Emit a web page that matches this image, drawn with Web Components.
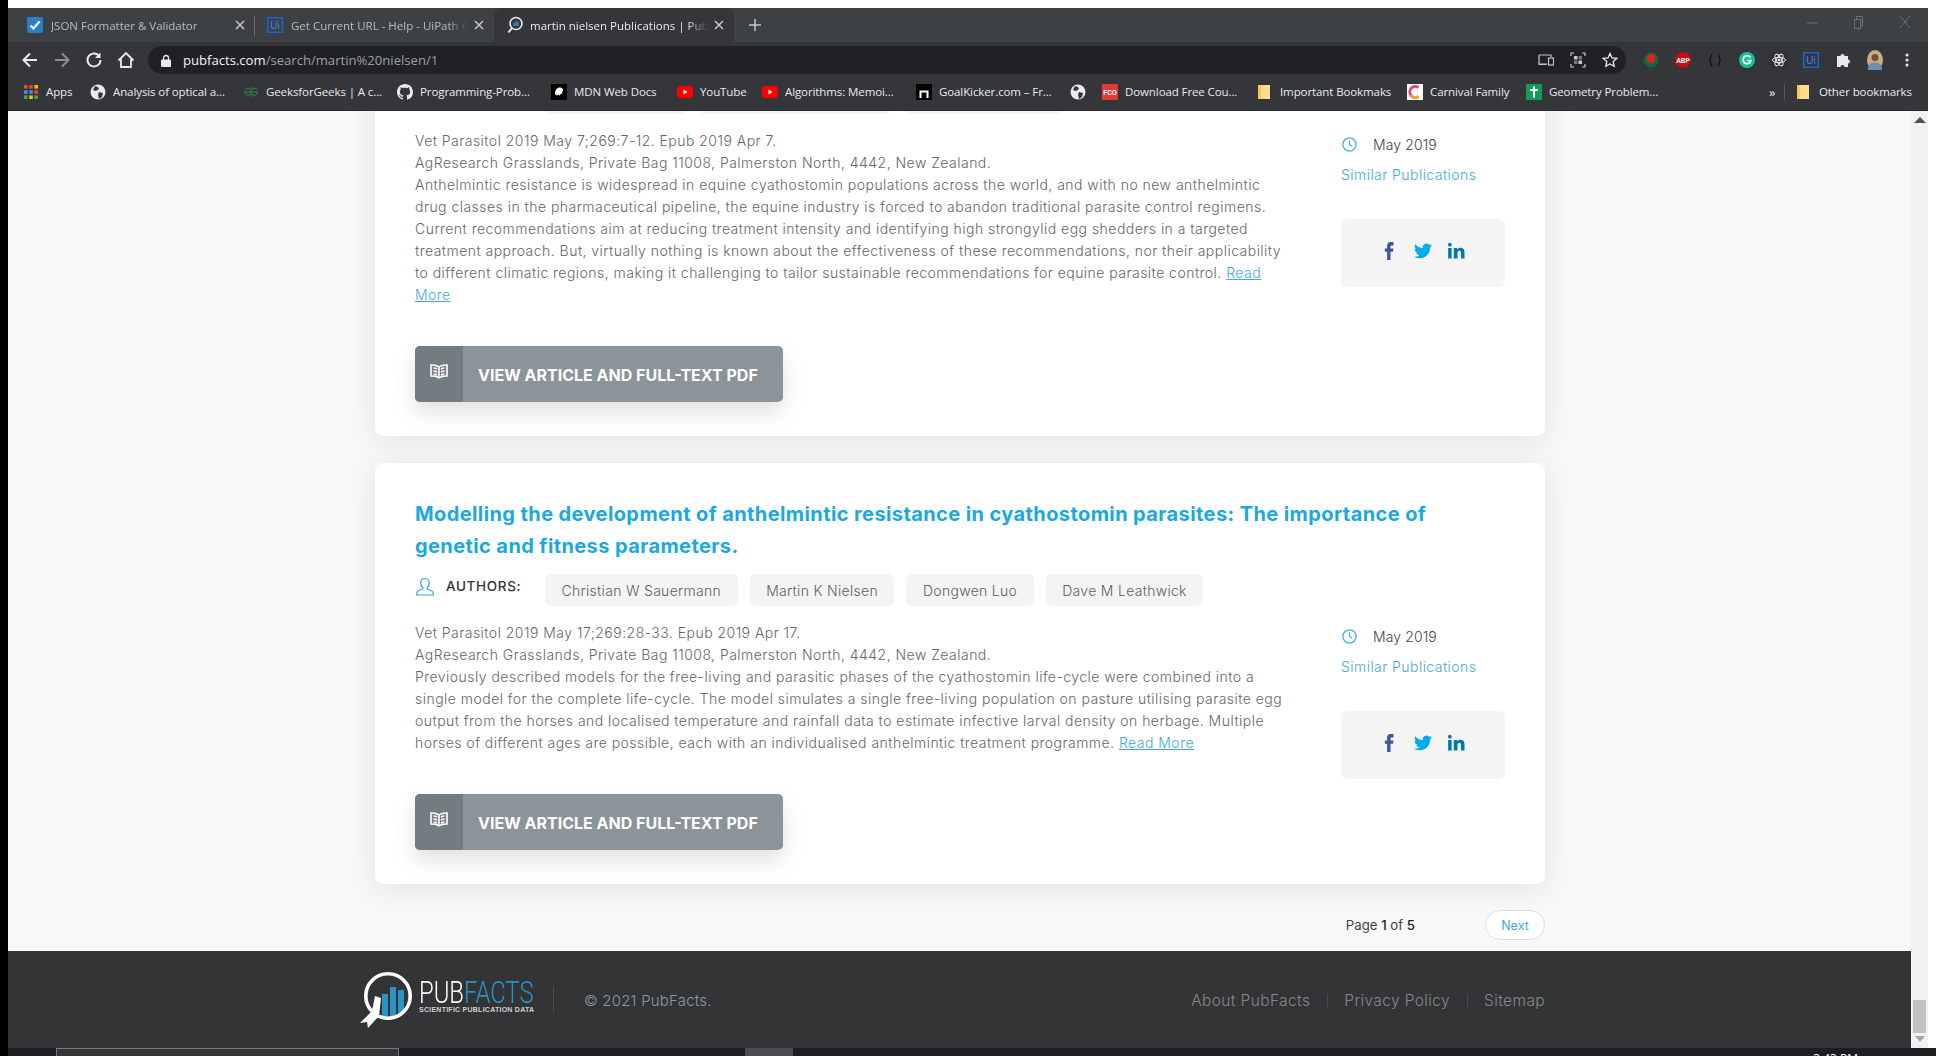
<!DOCTYPE html>
<html lang="en">
<head>
<meta charset="utf-8">
<title>martin nielsen Publications | PubFacts</title>
<style>
  html, body { margin: 0; height: 100%; background: #fff; overflow: hidden; }
</style>
</head>
<body>
<app-window>
  <browser-chrome slot="chrome">
    <chrome-tab slot="tabs" width="240" label="JSON Formatter &amp; Validator">
      <svg slot="icon" width="16" height="16" viewBox="0 0 16 16"><rect width="16" height="16" rx="2" fill="#2b7fc4"/><path d="M3.5 8.5l3 3 6-7" fill="none" stroke="#fff" stroke-width="2.2"/></svg>
    </chrome-tab>
    <chrome-tab slot="tabs" width="239" label="Get Current URL - Help - UiPath Community Forum" divider>
      <svg slot="icon" width="16" height="16" viewBox="0 0 16 16"><rect x=".7" y=".7" width="14.6" height="14.6" fill="none" stroke="#1667d9" stroke-width="1.4"/><text x="8" y="12" font-size="10" font-family="Liberation Sans" fill="#2f8cf0" text-anchor="middle">Ui</text></svg>
    </chrome-tab>
    <chrome-tab slot="tabs" width="240" label="martin nielsen Publications | PubFacts" active>
      <svg slot="icon" width="18" height="18" viewBox="0 0 18 18"><circle cx="10" cy="7.5" r="6" fill="none" stroke="#e8eaed" stroke-width="1.6"/><path d="M8 10V7M10 10V5M12 10V6" stroke="#2a93c4" stroke-width="1.6"/><path d="M6 12l-3.5 4.5" stroke="#e8eaed" stroke-width="2"/></svg>
    </chrome-tab>

    <chrome-bookmark slot="marks" width="67" label="Apps">
      <svg slot="icon" width="16" height="16" viewBox="0 0 16 16"><g fill="#ea4335"><rect x="1" y="1" width="3.6" height="3.6"/><rect x="6.2" y="1" width="3.6" height="3.6"/></g><rect x="11.4" y="1" width="3.6" height="3.6" fill="#fbbc05"/><g fill="#4285f4"><rect x="1" y="6.2" width="3.6" height="3.6"/><rect x="6.2" y="6.2" width="3.6" height="3.6"/></g><rect x="11.4" y="6.2" width="3.6" height="3.6" fill="#ea4335"/><rect x="1" y="11.4" width="3.6" height="3.6" fill="#34a853"/><rect x="6.2" y="11.4" width="3.6" height="3.6" fill="#fbbc05"/><rect x="11.4" y="11.4" width="3.6" height="3.6" fill="#34a853"/></svg>
    </chrome-bookmark>
    <chrome-bookmark slot="marks" width="153" label="Analysis of optical a...">
      <svg slot="icon" width="16" height="16" viewBox="0 0 16 16"><circle cx="8" cy="8" r="7.5" fill="#e8eaed"/><path d="M5 2l3 1 1 2-3 2-3-1zM9 8l4 1-1 4-3 2-1-4z" fill="#35363a"/></svg>
    </chrome-bookmark>
    <chrome-bookmark slot="marks" width="154" label="GeeksforGeeks | A c...">
      <svg slot="icon" width="16" height="16" viewBox="0 0 16 16"><path d="M8 8H1.5a3.4 3.4 0 0 0 5.6 2.4M8 8h6.5a3.4 3.4 0 0 1-5.6 2.4M2 5.5a3.4 3.4 0 0 1 5 0M14 5.5a3.4 3.4 0 0 0-5 0M8 3v10" fill="none" stroke="#2f8d46" stroke-width="1"/></svg>
    </chrome-bookmark>
    <chrome-bookmark slot="marks" width="154" label="Programming-Prob...">
      <svg slot="icon" width="16" height="16" viewBox="0 0 16 16"><path fill="#e8eaed" d="M8 0C3.58 0 0 3.58 0 8c0 3.54 2.29 6.53 5.47 7.59.4.07.55-.17.55-.38 0-.19-.01-.82-.01-1.49-2.01.37-2.53-.49-2.69-.94-.09-.23-.48-.94-.82-1.13-.28-.15-.68-.52-.01-.53.63-.01 1.08.58 1.23.82.72 1.21 1.87.87 2.33.66.07-.52.28-.87.51-1.07-1.78-.2-3.64-.89-3.64-3.95 0-.87.31-1.59.82-2.15-.08-.2-.36-1.02.08-2.12 0 0 .67-.21 2.2.82.64-.18 1.32-.27 2-.27s1.36.09 2 .27c1.53-1.04 2.2-.82 2.2-.82.44 1.1.16 1.92.08 2.12.51.56.82 1.27.82 2.15 0 3.07-1.87 3.75-3.65 3.95.29.25.54.73.54 1.48 0 1.07-.01 1.93-.01 2.2 0 .21.15.46.55.38A8.013 8.013 0 0016 8c0-4.42-3.58-8-8-8z"/></svg>
    </chrome-bookmark>
    <chrome-bookmark slot="marks" width="126" label="MDN Web Docs">
      <svg slot="icon" width="16" height="16" viewBox="0 0 16 16"><rect width="16" height="16" fill="#000"/><path d="M4 10c0-4 2-6.5 5-6.5 2 0 3.5 1.5 3 3.5l-1 1 .5 1.5-2 .5-.5 1.5-1.5-1-1.5 1z" fill="#fff"/></svg>
    </chrome-bookmark>
    <chrome-bookmark slot="marks" width="85" label="YouTube">
      <svg slot="icon" width="16" height="16" viewBox="0 0 16 16"><rect y="2" width="16" height="12" rx="3" fill="#f00"/><path d="M6.5 5.5v5l4-2.5z" fill="#fff"/></svg>
    </chrome-bookmark>
    <chrome-bookmark slot="marks" width="154" label="Algorithms: Memoi...">
      <svg slot="icon" width="16" height="16" viewBox="0 0 16 16"><rect y="2" width="16" height="12" rx="3" fill="#f00"/><path d="M6.5 5.5v5l4-2.5z" fill="#fff"/></svg>
    </chrome-bookmark>
    <chrome-bookmark slot="marks" width="154" label="GoalKicker.com – Fr...">
      <svg slot="icon" width="16" height="16" viewBox="0 0 16 16"><rect width="16" height="16" fill="#000"/><path d="M3.5 14V6.5h9V14h-2V8.5h-5V14z" fill="#fff"/></svg>
    </chrome-bookmark>
    <chrome-bookmark slot="marks" width="32">
      <svg slot="icon" width="16" height="16" viewBox="0 0 16 16"><circle cx="8" cy="8" r="7.5" fill="#e8eaed"/><path d="M5 2l3 1 1 2-3 2-3-1zM9 8l4 1-1 4-3 2-1-4z" fill="#35363a"/></svg>
    </chrome-bookmark>
    <chrome-bookmark slot="marks" width="156" label="Download Free Cou...">
      <svg slot="icon" width="16" height="16" viewBox="0 0 16 16"><rect width="16" height="16" fill="#e53935"/><text x="8" y="11" font-size="6.5" font-weight="700" font-family="Liberation Sans" fill="#fff" text-anchor="middle">FCO</text></svg>
    </chrome-bookmark>
    <chrome-bookmark slot="marks" width="149" label="Important Bookmaks">
      <svg slot="icon" style="margin-right:3px" width="12" height="16" viewBox="0 0 12 16"><path d="M0 1h12v14H0z" fill="#fcdc8c"/><path d="M0 1h3v14H0z" fill="#f6c65a"/></svg>
    </chrome-bookmark>
    <chrome-bookmark slot="marks" width="119" label="Carnival Family">
      <svg slot="icon" width="16" height="16" viewBox="0 0 16 16"><rect width="16" height="16" fill="#fff"/><path d="M11.5 3.5A5.5 5.5 0 1 0 11.5 12.5" fill="none" stroke="#e0457b" stroke-width="3"/><path d="M4 11a5.5 5.5 0 0 0 7.5 1.5" fill="none" stroke="#f4a62a" stroke-width="3"/></svg>
    </chrome-bookmark>
    <chrome-bookmark slot="marks" width="243" label="Geometry Problem...">
      <svg slot="icon" width="16" height="16" viewBox="0 0 16 16"><rect width="16" height="16" rx="1" fill="#0f9d58"/><path d="M8 2.5v11M4 6h8" stroke="#fff" stroke-width="2"/></svg>
    </chrome-bookmark>
  </browser-chrome>

  <page-view slot="page">
    <pub-card first>
      <author-chip slot="authors" style="width:142px"></author-chip>
      <author-chip slot="authors" style="width:193px"></author-chip>
      <author-chip slot="authors" style="width:158px"></author-chip>
      Vet Parasitol 2019 May 7;269:7-12. Epub 2019 Apr 7.<br>
      AgResearch Grasslands, Private Bag 11008, Palmerston North, 4442, New Zealand.<br>
      Anthelmintic resistance is widespread in equine cyathostomin populations across the world, and with no new anthelmintic<br>
      drug classes in the pharmaceutical pipeline, the equine industry is forced to abandon traditional parasite control regimens.<br>
      Current recommendations aim at reducing treatment intensity and identifying high strongylid egg shedders in a targeted<br>
      treatment approach. But, virtually nothing is known about the effectiveness of these recommendations, nor their applicability<br>
      to different climatic regions, making it challenging to tailor sustainable recommendations for equine parasite control. <a href="#" style="color:#3fa9dc">Read<br>More</a>
    </pub-card>
    <pub-card heading="Modelling the development of anthelmintic resistance in cyathostomin parasites: The importance of genetic and fitness parameters.">
      <author-chip slot="authors">Christian W Sauermann</author-chip>
      <author-chip slot="authors">Martin K Nielsen</author-chip>
      <author-chip slot="authors">Dongwen Luo</author-chip>
      <author-chip slot="authors">Dave M Leathwick</author-chip>
      Vet Parasitol 2019 May 17;269:28-33. Epub 2019 Apr 17.<br>
      AgResearch Grasslands, Private Bag 11008, Palmerston North, 4442, New Zealand.<br>
      Previously described models for the free-living and parasitic phases of the cyathostomin life-cycle were combined into a<br>
      single model for the complete life-cycle. The model simulates a single free-living population on pasture utilising parasite egg<br>
      output from the horses and localised temperature and rainfall data to estimate infective larval density on herbage. Multiple<br>
      horses of different ages are possible, each with an individualised anthelmintic treatment programme. <a href="#" style="color:#3fa9dc">Read More</a>
    </pub-card>
    <pager-bar></pager-bar>
    <site-footer></site-footer>
  </page-view>
</app-window>

<script>
const UI_FONT = '"Open Sans", "Liberation Sans", sans-serif';
const PAGE_FONT = 'Inter, "Liberation Sans", sans-serif';

class AppWindow extends HTMLElement {
  constructor() {
    super();
    this.attachShadow({ mode: 'open' }).innerHTML = `
      <style>
        :host { display: block; width: 1936px; height: 1056px; overflow: hidden; background: #fff; }
        .frame { display: flex; flex-direction: column; height: 1056px; box-sizing: border-box; padding-top: 8px; border-left: 8px solid #000; }
        .win { width: 1920px; height: 1040px; display: flex; flex-direction: column; flex: none; }
        .body { flex: 1; min-height: 0; display: flex; }
        .view { flex: 1; min-width: 0; overflow: hidden; display: flex; }
        .scroll { width: 17px; flex: none; background: #f1f1f1; display: flex; flex-direction: column; align-items: center; justify-content: space-between; padding: 6px 0 6px; box-sizing: border-box; }
        .thumb { width: 13px; height: 33px; background: #c1c1c1; margin-top: auto; margin-bottom: 3px; }
        .up { width: 0; border: 6px solid transparent; border-top: 0; border-bottom: 6px solid #505050; }
        .down { width: 0; border: 5px solid transparent; border-bottom: 0; border-top: 6px solid #a3a3a3; }
        .taskbar { height: 8px; flex: none; background: #1d1e22; position: relative; overflow: hidden; display: flex; font: 12px ${UI_FONT}; color: #fff; }
        .task-a { width: 343px; margin-left: 48px; background: #333435; border: 1px solid #77787a; border-bottom: 0; box-sizing: border-box; }
        .task-b { width: 48px; margin-left: 346px; background: #4b4c50; }
        .clock { margin-left: auto; margin-right: 78px; line-height: 1; padding-top: 5px; }
      </style>
      <div class="frame">
        <div class="win">
          <slot name="chrome"></slot>
          <div class="body">
            <div class="view"><slot name="page"></slot></div>
            <div class="scroll"><i class="up"></i><i class="thumb"></i><i class="down"></i></div>
          </div>
        </div>
        <div class="taskbar"><div class="task-a"></div><div class="task-b"></div><div class="clock">3:43 PM</div></div>
      </div>`;
  }
}
customElements.define('app-window', AppWindow);

class BrowserChrome extends HTMLElement {
  constructor() {
    super();
    this.attachShadow({ mode: 'open' }).innerHTML = `
      <style>
        :host { display: block; flex: none; font: 12px ${UI_FONT}; color: #e8eaed; }
        .strip { height: 34px; background: #3e4144; display: flex; align-items: flex-end; padding-left: 7px; }
        .tabs { display: flex; }
        .plus { margin-left: 14px; height: 34px; display: flex; align-items: center; }
        .win-ctl { margin-left: auto; display: flex; align-items: center; gap: 35px; height: 28px; align-self: flex-start; padding-right: 17px; }
        .bar { height: 36px; background: #35363a; display: flex; align-items: center; padding-left: 12px; box-sizing: border-box; }
        .nav { display: flex; gap: 12px; align-items: center; }
        .nav svg { display: block; }
        .url { margin-left: 12px; width: 1478px; height: 28px; border-radius: 14px; background: #202124; display: flex; align-items: center; box-sizing: border-box; padding: 0 0 0 13px; flex: none; }
        .lock { margin-right: 12px; }
        .addr { font-size: 13.1px; color: #9aa0a6; white-space: nowrap; }
        .addr b { font-weight: 400; color: #f1f3f4; }
        .url-icons { margin-left: auto; display: flex; gap: 16px; padding-right: 8px; align-items: center; }
        .ext { display: flex; align-items: center; margin-left: 17px; gap: 16px; }
        .marks { height: 32px; box-sizing: border-box; padding: 0 0 5px 15px; background: #35363a; display: flex; align-items: center; position: relative; }
        .marks-r { display: flex; align-items: center; }
        .more { width: 15px; font-size: 13px; color: #e8eaed; }
        .sep { width: 1px; height: 16px; background: #55575a; margin-right: 12px; }
        .edge { height: 1px; background: #2a2b2e; }
      </style>
      <div class="strip">
        <div class="tabs"><slot name="tabs"></slot></div>
        <div class="plus"><svg width="14" height="14" viewBox="0 0 14 14"><path d="M7 1v12M1 7h12" stroke="#c4c7c9" stroke-width="1.5"/></svg></div>
        <div class="win-ctl">
          <svg width="11" height="11" viewBox="0 0 11 11"><path d="M0 6h11" stroke="#6e7174"/></svg>
          <svg width="11" height="13" viewBox="0 0 11 13"><path d="M1.5 3.5h6v9h-6zM3.5 3.5V.5h6v9H7.5" fill="none" stroke="#6e7174"/></svg>
          <svg width="12" height="14" viewBox="0 0 12 14"><path d="M1 1l10 12M11 1L1 13" stroke="#6e7174"/></svg>
        </div>
      </div>
      <div class="bar">
        <div class="nav">
          <svg width="20" height="20" viewBox="0 0 20 20"><path d="M17 10H4M10 3.5L3.5 10l6.5 6.5" fill="none" stroke="#e8eaed" stroke-width="2"/></svg>
          <svg width="20" height="20" viewBox="0 0 20 20"><path d="M3 10h13M10 3.5l6.5 6.5L10 16.5" fill="none" stroke="#8a8d90" stroke-width="2"/></svg>
          <svg width="20" height="20" viewBox="0 0 20 20"><path d="M15.5 6.5A6.5 6.5 0 1 0 16.5 10" fill="none" stroke="#e8eaed" stroke-width="2"/><path d="M16.5 2.5V8H11z" fill="#e8eaed"/></svg>
          <svg width="20" height="20" viewBox="0 0 20 20"><path d="M2.5 10.5L10 3l7.5 7.5M5 9v8h10V9" fill="none" stroke="#e8eaed" stroke-width="1.8"/></svg>
        </div>
        <div class="url">
          <svg class="lock" width="10" height="13" viewBox="0 0 10 13"><path d="M2.5 6V4a2.5 2.5 0 0 1 5 0v2" fill="none" stroke="#e8eaed" stroke-width="1.3"/><rect y="5.5" width="10" height="7.5" rx="1" fill="#e8eaed"/></svg>
          <span class="addr"><b>pubfacts.com</b>/search/martin%20nielsen/1</span>
          <div class="url-icons">
            <svg width="16" height="16" viewBox="0 0 16 16"><path d="M1 3h12v2M1 3v9h8M.5 12.5h8" fill="none" stroke="#c4c7c9" stroke-width="1.2"/><rect x="10.5" y="6" width="5" height="7" fill="none" stroke="#c4c7c9" stroke-width="1.2"/></svg>
            <svg width="16" height="16" viewBox="0 0 16 16"><path d="M1 4V1h3M12 1h3v3M15 12v3h-3M4 15H1v-3" fill="none" stroke="#c4c7c9" stroke-width="1.2"/><path d="M4 4h3.5v3.5H4zM8.5 8.5H12V12H8.5z" fill="#c4c7c9"/><path d="M8.5 4H12v3.5H8.5zM4 8.5h3.5V12H4z" fill="#777"/></svg>
            <svg width="16" height="16" viewBox="0 0 16 16"><path d="M8 1.5l2 4.4 4.8.5-3.600 3.200 1 4.700L8 11.900l-4.200 2.400 1-4.700L1.200 6.400 6 5.900z" fill="none" stroke="#e8eaed" stroke-width="1.3"/></svg>
          </div>
        </div>
        <div class="ext">
          <svg width="16" height="16" viewBox="0 0 16 16"><circle cx="8" cy="8" r="7.5" fill="#0b6b3a"/><circle cx="8" cy="6.5" r="4.5" fill="#e0201b"/></svg>
          <svg width="16" height="16" viewBox="0 0 16 16"><circle cx="8" cy="8" r="8" fill="#c70d14"/><text x="8" y="10.5" font-size="6.5" font-weight="700" font-family="Liberation Sans" fill="#fff" text-anchor="middle">ABP</text></svg>
          <svg width="16" height="16" viewBox="0 0 16 16"><path d="M5.5 1.5C3.5 1.5 4.5 7 2.5 8c2 1 1 6.5 3 6.5M10.5 1.5c2 0 1 5.5 3 6.5-2 1-1 6.5-3 6.5" fill="none" stroke="#111" stroke-width="1.2"/></svg>
          <svg width="16" height="16" viewBox="0 0 16 16"><circle cx="8" cy="8" r="8" fill="#15c39a"/><path d="M11.5 5.5A4 4 0 1 0 12 8.5H8.5" fill="none" stroke="#fff" stroke-width="1.7"/></svg>
          <svg width="16" height="16" viewBox="0 0 16 16"><rect width="16" height="16" rx="2" fill="#2d2e31"/><g fill="none" stroke="#e8eaed"><ellipse cx="8" cy="8" rx="6.5" ry="2.6"/><ellipse cx="8" cy="8" rx="6.5" ry="2.6" transform="rotate(60 8 8)"/><ellipse cx="8" cy="8" rx="6.5" ry="2.6" transform="rotate(120 8 8)"/></g><circle cx="8" cy="8" r="1.3" fill="#e8eaed"/></svg>
          <svg width="16" height="16" viewBox="0 0 16 16"><rect x=".7" y=".7" width="14.6" height="14.6" fill="none" stroke="#1667d9" stroke-width="1.4"/><text x="8" y="12" font-size="10" font-family="Liberation Sans" fill="#2f8cf0" text-anchor="middle">Ui</text></svg>
          <svg width="16" height="16" viewBox="0 0 16 16"><path d="M2 4h3.5a2 2 0 1 1 4 0H13v3.5a2 2 0 1 1 0 4V15H9.5a2 2 0 1 0-4 0H2z" fill="#e8eaed"/></svg>
          <svg width="16" height="20" viewBox="0 0 16 20"><ellipse cx="8" cy="10" rx="8" ry="10" fill="#c9ad82"/><circle cx="8" cy="7.5" r="3.5" fill="#7a5230"/><path d="M1 20c0-6 3-7.5 7-7.5s7 1.5 7 7.5z" fill="#6d8fb5"/></svg>
          <svg width="16" height="16" viewBox="0 0 16 16"><g fill="#e8eaed"><circle cx="8" cy="3" r="1.5"/><circle cx="8" cy="8" r="1.5"/><circle cx="8" cy="13" r="1.5"/></g></svg>
        </div>
      </div>
      <div class="marks">
        <slot name="marks"></slot>
        <div class="marks-r">
          <span class="more">»</span><span class="sep"></span>
          <chrome-bookmark width="122" label="Other bookmarks">
            <svg slot="icon" style="margin-right:3px" width="12" height="16" viewBox="0 0 12 16"><path d="M0 1h12v14H0z" fill="#fcdc8c"/><path d="M0 1h3v14H0z" fill="#f6c65a"/></svg>
          </chrome-bookmark>
        </div>
      </div>
      <div class="edge"></div>`;
  }
}
customElements.define('browser-chrome', BrowserChrome);

class ChromeTab extends HTMLElement {
  connectedCallback() {
    if (this.shadowRoot) return;
    const active = this.hasAttribute('active');
    const w = this.getAttribute('width');
    this.attachShadow({ mode: 'open' }).innerHTML = `
      <style>
        :host { display: block; width: ${w}px; height: 34px; box-sizing: border-box; position: relative; }
        .tab { height: 100%; display: flex; align-items: center; box-sizing: border-box; padding: 0 10px 0 12px; border-radius: 8px 8px 0 0; background: ${active ? '#35363a' : 'transparent'}; }
        .ic { width: 24px; flex: none; display: flex; }
        .t { flex: 1; min-width: 0; white-space: nowrap; overflow: hidden; color: ${active ? '#e8eaed' : '#b9bcbf'}; font-size: 11.5px;
             -webkit-mask-image: linear-gradient(90deg, #000 88%, transparent); mask-image: linear-gradient(90deg, #000 88%, transparent); }
        .x { flex: none; margin-left: 6px; display: flex; }
        .div { position: absolute; left: -1px; top: 8px; width: 1px; height: 20px; background: #6a6c6f; }
      </style>
      ${this.hasAttribute('divider') ? '<i class="div"></i>' : ''}
      <div class="tab">
        <span class="ic"><slot name="icon"></slot></span>
        <span class="t">${this.getAttribute('label').replace(/&/g, '&amp;')}</span>
        <span class="x"><svg width="10" height="10" viewBox="0 0 10 10"><path d="M1 1l8 8M9 1L1 9" stroke="#c4c7c9" stroke-width="1.5"/></svg></span>
      </div>`;
  }
}
customElements.define('chrome-tab', ChromeTab);

class ChromeBookmark extends HTMLElement {
  connectedCallback() {
    if (this.shadowRoot) return;
    this.attachShadow({ mode: 'open' }).innerHTML = `
      <style>
        :host { display: flex; align-items: center; gap: 7px; width: ${this.getAttribute('width')}px; flex: none; white-space: nowrap; font: 11.5px ${UI_FONT}; color: #e8eaed; letter-spacing: -.1px; }
        ::slotted(svg) { display: block; flex: none; }
      </style>
      <slot name="icon"></slot><span>${this.getAttribute('label') || ''}</span>`;
  }
}
customElements.define('chrome-bookmark', ChromeBookmark);

class PageView extends HTMLElement {
  constructor() {
    super();
    this.attachShadow({ mode: 'open' }).innerHTML = `
      <style>
        :host { display: flex; flex-direction: column; width: 1903px; background: #f8f8f8; font-family: ${PAGE_FONT}; }
      </style>
      <slot></slot>`;
  }
}
customElements.define('page-view', PageView);

class PubCard extends HTMLElement {
  connectedCallback() {
    if (this.shadowRoot) return;
    const first = this.hasAttribute('first');
    this.attachShadow({ mode: 'open' }).innerHTML = `
      <style>
        :host { display: block; width: 1170px; box-sizing: border-box; align-self: center; margin: ${first ? '-140px' : '27px'} 0 0 0; flex: none;
                background: #fff; border-radius: 8px; padding: 35px 40px 34px; box-shadow: 0 4px 30px rgba(0,0,0,.09); position: relative; left: .5px; }
        h2 { margin: 0; min-height: 64px; max-width: 1060px; font: 700 20px/32px ${PAGE_FONT}; color: #1ba8e0; letter-spacing: .4px; }
        .authors { display: flex; height: 32px; margin-top: 13px; }
        .label { width: 130px; flex: none; display: flex; gap: 11px; color: #333; font-size: 13.5px; font-weight: 500; letter-spacing: .65px; align-items: flex-start; padding-top: 3px; box-sizing: border-box; }
        .label svg { margin-top: -1px; }
        .chips { display: flex; gap: 12px; margin-top: -1px; }
        .cols { display: grid; grid-template-columns: 1fr 164px; margin-top: 15px; }
        .abs { font-size: 14px; line-height: 22px; color: #666; font-weight: 300; white-space: nowrap; letter-spacing: .47px; }
        .side { padding-top: 3px; font-size: 14px; color: #444; font-weight: 300; }
        .date { display: flex; align-items: center; height: 22px; gap: 16px; padding-left: 1px; letter-spacing: .1px; }
        .sim { display: block; height: 22px; line-height: 22px; margin-top: 9px; color: #3fa9dc; font-size: 14px; letter-spacing: .45px; }
        social-box { margin-top: 33px; }
        view-button { margin-top: 40px; }
      </style>
      <h2>${this.getAttribute('heading') || ''}</h2>
      <div class="authors">
        <div class="label">
          <svg width="20" height="20" viewBox="0 0 20 20"><path d="M10 1.5c-2.7 0-4.3 2-4.3 4.6 0 2 .8 3.5 2 4.4V12c-2 .9-6 1.600-6 4.500V18h16.600v-1.500c0-2.900-4-3.600-6-4.500v-1.500c1.200-.9 2-2.400 2-4.400 0-2.600-1.600-4.600-4.300-4.600z" fill="none" stroke="#2ea7e0" stroke-width="1.2"/></svg>
          <span>AUTHORS:</span>
        </div>
        <div class="chips"><slot name="authors"></slot></div>
      </div>
      <div class="cols">
        <div>
          <div class="abs"><slot></slot></div>
          <view-button></view-button>
        </div>
        <div class="side">
          <div class="date">
            <svg width="15" height="15" viewBox="0 0 15 15"><circle cx="7.5" cy="7.5" r="6.6" fill="none" stroke="#3fb1e6" stroke-width="1.3"/><path d="M7.5 3.5v4l2.5 1.8" fill="none" stroke="#3fb1e6" stroke-width="1.2"/></svg>
            <span>May 2019</span>
          </div>
          <a class="sim">Similar Publications</a>
          <social-box></social-box>
        </div>
      </div>`;
  }
}
customElements.define('pub-card', PubCard);

class AuthorChip extends HTMLElement {
  constructor() {
    super();
    this.attachShadow({ mode: 'open' }).innerHTML = `
      <style>
        :host { display: flex; align-items: center; height: 32px; box-sizing: border-box; padding: 0 16.5px; background: #f4f4f4; border-radius: 6px; font-size: 14px; font-weight: 300; color: #5f5f5f; white-space: nowrap; letter-spacing: .3px; }
      </style>
      <slot></slot>`;
  }
}
customElements.define('author-chip', AuthorChip);

class ViewButton extends HTMLElement {
  constructor() {
    super();
    this.attachShadow({ mode: 'open' }).innerHTML = `
      <style>
        :host { display: flex; width: 368px; height: 56px; border-radius: 5px; overflow: hidden; background: #8a9499; color: #fff; box-shadow: 0 10px 22px rgba(0,0,0,.13); }
        .ic { width: 48px; flex: none; background: #727c81; display: flex; justify-content: center; padding-top: 17px; box-sizing: border-box; }
        .t { padding-left: 15px; font-size: 16px; font-weight: 700; line-height: 58px; white-space: nowrap; }
      </style>
      <div class="ic"><svg width="18" height="17" viewBox="0 0 18 16"><path d="M9 3.5C7 1.8 4 1.3 1 1.5v11c3-.2 6 .3 8 2 2-1.7 5-2.2 8-2v-11c-3-.2-6 .3-8 2zM9 3.5v11M3.500 4.500c1.400 0 2.600.3 3.500 1M3.500 7.500c1.400 0 2.600.3 3.500 1M3.500 10.500c1.400 0 2.600.3 3.500 1M14.500 4.500c-1.400 0-2.600.3-3.500 1M14.500 7.500c-1.400 0-2.600.3-3.500 1M14.500 10.500c-1.400 0-2.600.3-3.500 1" fill="none" stroke="#fff" stroke-width="1.6"/></svg></div>
      <div class="t">VIEW ARTICLE AND FULL-TEXT PDF</div>`;
  }
}
customElements.define('view-button', ViewButton);

class SocialBox extends HTMLElement {
  constructor() {
    super();
    this.attachShadow({ mode: 'open' }).innerHTML = `
      <style>
        :host { display: flex; align-items: center; justify-content: center; height: 68px; box-sizing: border-box; padding-bottom: 5px; background: #f4f4f4; border-radius: 6px; gap: 16px; }
        svg { display: block; }
      </style>
      <svg width="18" height="18" viewBox="0 0 24 24"><path fill="#3b5998" d="M14 8.5V6c0-1 .5-1.5 1.7-1.5H18V0h-3.6C10.9 0 9.5 2.1 9.5 5v3.5H6.5V13h3v11H14V13h3.4l.6-4.5z"/></svg>
      <svg width="18" height="18" viewBox="0 0 24 24"><path fill="#00aced" d="M23.953 4.57a10 10 0 01-2.825.775 4.958 4.958 0 002.163-2.723c-.951.555-2.005.959-3.127 1.184a4.92 4.92 0 00-8.384 4.482C7.69 8.095 4.067 6.13 1.64 3.162a4.822 4.822 0 00-.666 2.475c0 1.71.87 3.213 2.188 4.096a4.904 4.904 0 01-2.228-.616v.06a4.923 4.923 0 003.946 4.827 4.996 4.996 0 01-2.212.085 4.936 4.936 0 004.604 3.417 9.867 9.867 0 01-6.102 2.105c-.39 0-.779-.023-1.17-.067a13.995 13.995 0 007.557 2.209c9.053 0 13.998-7.496 13.998-13.985 0-.21 0-.42-.015-.63A9.935 9.935 0 0024 4.59z"/></svg>
      <svg width="18" height="18" viewBox="0 0 24 24"><path fill="#0077b5" d="M4.98 3.5C4.98 4.88 3.87 6 2.5 6S0 4.88 0 3.5 1.12 1 2.5 1s2.48 1.12 2.48 2.5zM.2 8h4.6v14H.2V8zm7.5 0h4.4v1.9h.06c.61-1.16 2.11-2.38 4.34-2.38 4.64 0 5.5 3.05 5.5 7.02V22h-4.6v-6.6c0-1.57-.03-3.6-2.2-3.6-2.2 0-2.54 1.72-2.54 3.49V22H7.7V8z"/></svg>`;
  }
}
customElements.define('social-box', SocialBox);

class PagerBar extends HTMLElement {
  constructor() {
    super();
    this.attachShadow({ mode: 'open' }).innerHTML = `
      <style>
        :host { display: flex; justify-content: flex-end; align-items: center; width: 1170px; align-self: center; height: 30px; margin: 26px 0 11px; flex: none; font-size: 13.2px; color: #444; position: relative; left: .5px; }
        .p { margin-right: 70px; }
        .p b { font-weight: 500; color: #222; }
        .next { width: 60px; height: 30px; box-sizing: border-box; border: 1px solid #ddd; border-radius: 15px; background: #fff; color: #3fa9dc; font-size: 12.5px; display: flex; align-items: center; justify-content: center; }
      </style>
      <span class="p">Page <b>1</b> of <b>5</b></span>
      <span class="next">Next</span>`;
  }
}
customElements.define('pager-bar', PagerBar);

class SiteFooter extends HTMLElement {
  constructor() {
    super();
    this.attachShadow({ mode: 'open' }).innerHTML = `
      <style>
        :host { display: block; height: 97px; flex: none; background: #333436; font-family: ${PAGE_FONT}; }
        .in { width: 1170px; height: 100%; margin: 0 auto; display: flex; align-items: center; position: relative; left: .5px; }
        .logo { display: flex; align-items: flex-start; margin-left: -17px; width: 195px; flex: none; }
        .logo svg { display: block; flex: none; }
        .word { margin-left: 1px; margin-top: 8px; width: 115px; }
        .pf { font: 300 32px/30px Roboto, "Liberation Sans", sans-serif; color: #fff; white-space: nowrap; transform: scaleX(.745); transform-origin: left; width: max-content; }
        .pf span { color: #2a93c4; }
        .tag { font: 700 7px/10px "Liberation Sans", sans-serif; color: #d0d2d3; letter-spacing: .25px; white-space: nowrap; margin-top: -2px; }
        .div { width: 1px; height: 27px; background: #4b4c4f; }
        .c { margin-left: 30px; padding-top: 2px; font-size: 15px; font-weight: 300; color: #8a9aa6; letter-spacing: .2px; }
        nav { margin-left: auto; padding-top: 2px; display: flex; align-items: center; font-size: 15.5px; font-weight: 300; color: #85898c; letter-spacing: .38px; }
        nav i { width: 1px; height: 14px; background: #48494c; margin: 0 16.5px; }
      </style>
      <div class="in">
        <div class="logo">
          <svg width="60" height="62" viewBox="0 0 60 62">
            <defs><clipPath id="lens"><circle cx="30" cy="27" r="21"/></clipPath></defs>
            <path d="M24 25h6v24h-6zM32 18h6v31h-6zM40 21h6v24h-6z" fill="#2a93c4" clip-path="url(#lens)"/>
            <circle cx="30" cy="27" r="22.2" fill="none" stroke="#fff" stroke-width="3.6"/>
            <path d="M17 27l6 2-2 18-11 12-1-6-7 1 12-12z" fill="#fff"/>
          </svg>
          <div class="word">
            <div class="pf">PUB<span>FACTS</span></div>
            <div class="tag">SCIENTIFIC PUBLICATION DATA</div>
          </div>
        </div>
        <i class="div"></i>
        <span class="c">© 2021 PubFacts.</span>
        <nav><span>About PubFacts</span><i></i><span>Privacy Policy</span><i></i><span>Sitemap</span></nav>
      </div>`;
  }
}
customElements.define('site-footer', SiteFooter);
</script>
</body>
</html>
